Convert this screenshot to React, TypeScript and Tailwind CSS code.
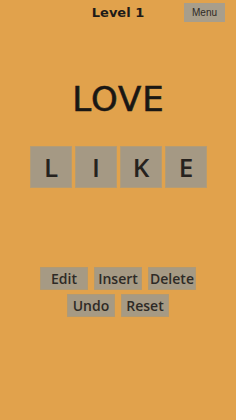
export default function App() {
  const letters = ["L", "I", "K", "E"];
  const row1 = ["Edit", "Insert", "Delete"];
  const row2 = ["Undo", "Reset"];
  const btn =
    "w-[48px] h-[23px] flex items-center justify-center bg-[#a69a84] border border-[#b09a74] text-[14px] font-semibold text-[#2e2a26] font-['Open_Sans',sans-serif]";

  return (
    <div className="w-[236px] h-[420px] bg-[#e1a24c] flex flex-col font-['DejaVu_Sans',sans-serif] text-[#1e1b18]">
      <div className="relative h-[25px] flex items-center justify-center">
        <span className="text-[13px] font-bold">Level 1</span>
        <button className="absolute right-[11px] top-[3px] w-[41px] h-[19px] bg-[#a89e8b] text-[10px] text-[#2e2a26] font-['Liberation_Sans',sans-serif]">
          Menu
        </button>
      </div>

      <div className="mt-[57px] flex justify-center pl-[1px]">
        <span className="text-[34px] leading-none tracking-[1px] text-[#1a1714] [-webkit-text-stroke:0.6px_#1a1714]">LOVE</span>
      </div>

      <div className="mt-[30px] flex justify-center gap-[3px] pl-[1px]">
        {letters.map((l) => (
          <div
            key={l}
            className="w-[42px] h-[42px] bg-[#a59984] border border-[#b39c76] flex items-center justify-center text-[26px] font-semibold text-[#26221e] font-['Open_Sans',sans-serif]"
          >
            {l}
          </div>
        ))}
      </div>

      <div className="mt-[79px] flex flex-col items-center gap-[4px]">
        <div className="flex gap-[6px]">
          {row1.map((t) => (
            <div key={t} className={btn}>
              {t}
            </div>
          ))}
        </div>
        <div className="flex gap-[6px]">
          {row2.map((t) => (
            <div key={t} className={btn}>
              {t}
            </div>
          ))}
        </div>
      </div>
    </div>
  );
}
